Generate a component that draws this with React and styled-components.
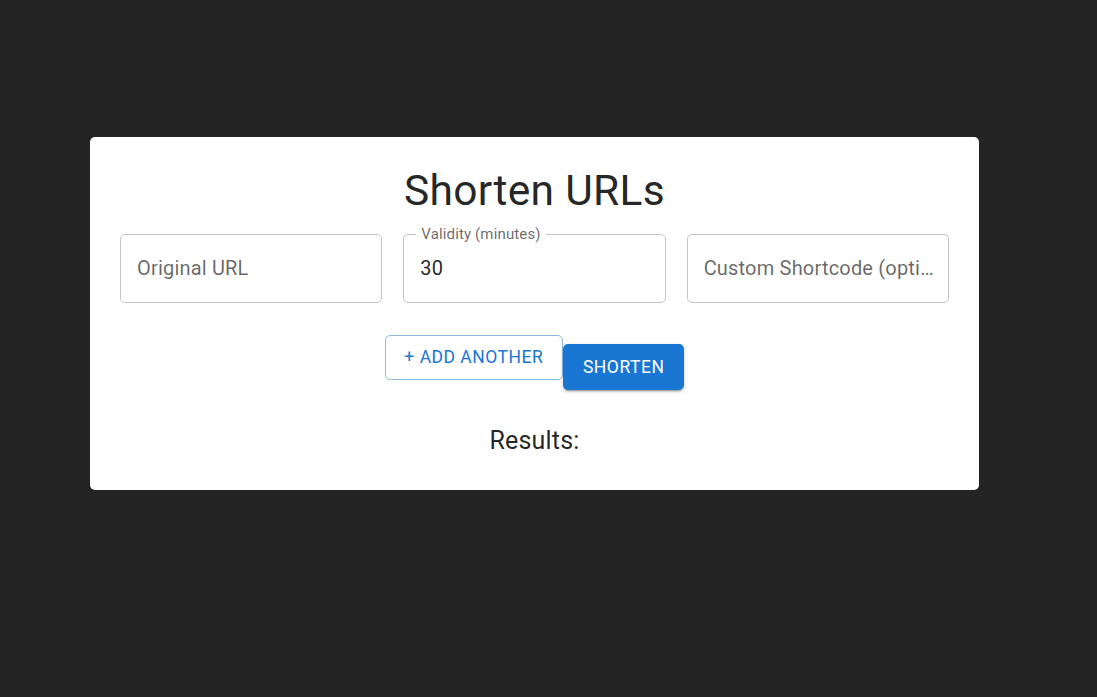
import React from "react";
import styled, { createGlobalStyle } from "styled-components";

const Global = createGlobalStyle`
  html, body {
    margin: 0;
    padding: 0;
    background: #242424;
    font-family: Roboto, "Liberation Sans", Arial, sans-serif;
  }
  * { box-sizing: border-box; }
`;

const Page = styled.div`
  min-height: 697px;
  padding: 137px 0 0 90px;
`;

const Card = styled.section`
  width: 889px;
  background: #ffffff;
  border-radius: 5px;
  padding: 28.4px 30px 29px;
  color: rgba(0, 0, 0, 0.87);
`;

const Title = styled.h1`
  margin: 0;
  text-align: center;
  font-size: 42.5px;
  font-weight: 400;
  line-height: 1.235;
  letter-spacing: 0.00735em;
`;

const FieldRow = styled.div`
  margin-top: 16px;
  display: grid;
  grid-template-columns: repeat(3, 1fr);
  gap: 21px;
`;

const Field = styled.div`
  position: relative;
  height: 69px;
  border: 1px solid #c4c4c4;
  border-radius: 5px;
  display: flex;
  align-items: center;
  padding: 0 14px 0 16px;
`;

const FloatLabel = styled.label`
  position: absolute;
  top: -10px;
  left: 12px;
  padding: 0 5px;
  background: #ffffff;
  font-size: 15px;
  line-height: 18px;
  color: rgba(0, 0, 0, 0.6);
  letter-spacing: 0.00938em;
  white-space: nowrap;
`;

const Input = styled.input`
  width: 100%;
  border: 0;
  outline: 0;
  padding: 0;
  margin: 0;
  background: transparent;
  font-family: inherit;
  font-size: 20px;
  line-height: 28.75px;
  letter-spacing: 0.00938em;
  color: rgba(0, 0, 0, 0.87);
  text-overflow: ellipsis;
  &::placeholder {
    color: rgba(0, 0, 0, 0.6);
    opacity: 1;
  }
`;

const ButtonRow = styled.div`
  margin-top: 32px;
  display: flex;
  justify-content: center;
  align-items: flex-start;
`;

const Button = styled.button`
  font-family: inherit;
  font-size: 17.5px;
  font-weight: 400;
  line-height: 1.75;
  letter-spacing: 0.02857em;
  text-transform: uppercase;
  border-radius: 5px;
  cursor: pointer;
  margin: ${(p) => (p.$offset ? `${p.$offset}px 0 0` : "0")};
  background: ${(p) => (p.$variant === "contained" ? "#1976d2" : "#ffffff")};
  color: ${(p) => (p.$variant === "contained" ? "#ffffff" : "#1976d2")};
  border: ${(p) => (p.$variant === "contained" ? "0" : "1px solid #8cbbe9")};
  padding: ${(p) => (p.$variant === "contained" ? "7.8px 20px" : "6.25px 18.75px")};
  box-shadow: ${(p) =>
    p.$variant === "contained"
      ? "0px 3px 1px -2px rgba(0,0,0,0.2), 0px 2px 2px 0px rgba(0,0,0,0.14), 0px 1px 5px 0px rgba(0,0,0,0.12)"
      : "none"};
`;

const Results = styled.h2`
  margin: 31px 0 0;
  text-align: center;
  font-size: 25px;
  font-weight: 400;
  line-height: 1.6;
  letter-spacing: 0.0075em;
`;

function TextField({ label, value }) {
  if (value !== undefined) {
    return (
      <Field>
        <FloatLabel>{label}</FloatLabel>
        <Input defaultValue={value} />
      </Field>
    );
  }
  return (
    <Field>
      <Input placeholder={label} />
    </Field>
  );
}

export default function App() {
  return (
    <>
      <Global />
      <Page>
        <Card>
          <Title>Shorten URLs</Title>
          <FieldRow>
            <TextField label="Original URL" />
            <TextField label="Validity (minutes)" value="30" />
            <TextField label="Custom Shortcode (optional)" />
          </FieldRow>
          <ButtonRow>
            <Button $variant="outlined">+ Add Another</Button>
            <Button $variant="contained" $offset={9}>
              Shorten
            </Button>
          </ButtonRow>
          <Results>Results:</Results>
        </Card>
      </Page>
    </>
  );
}
